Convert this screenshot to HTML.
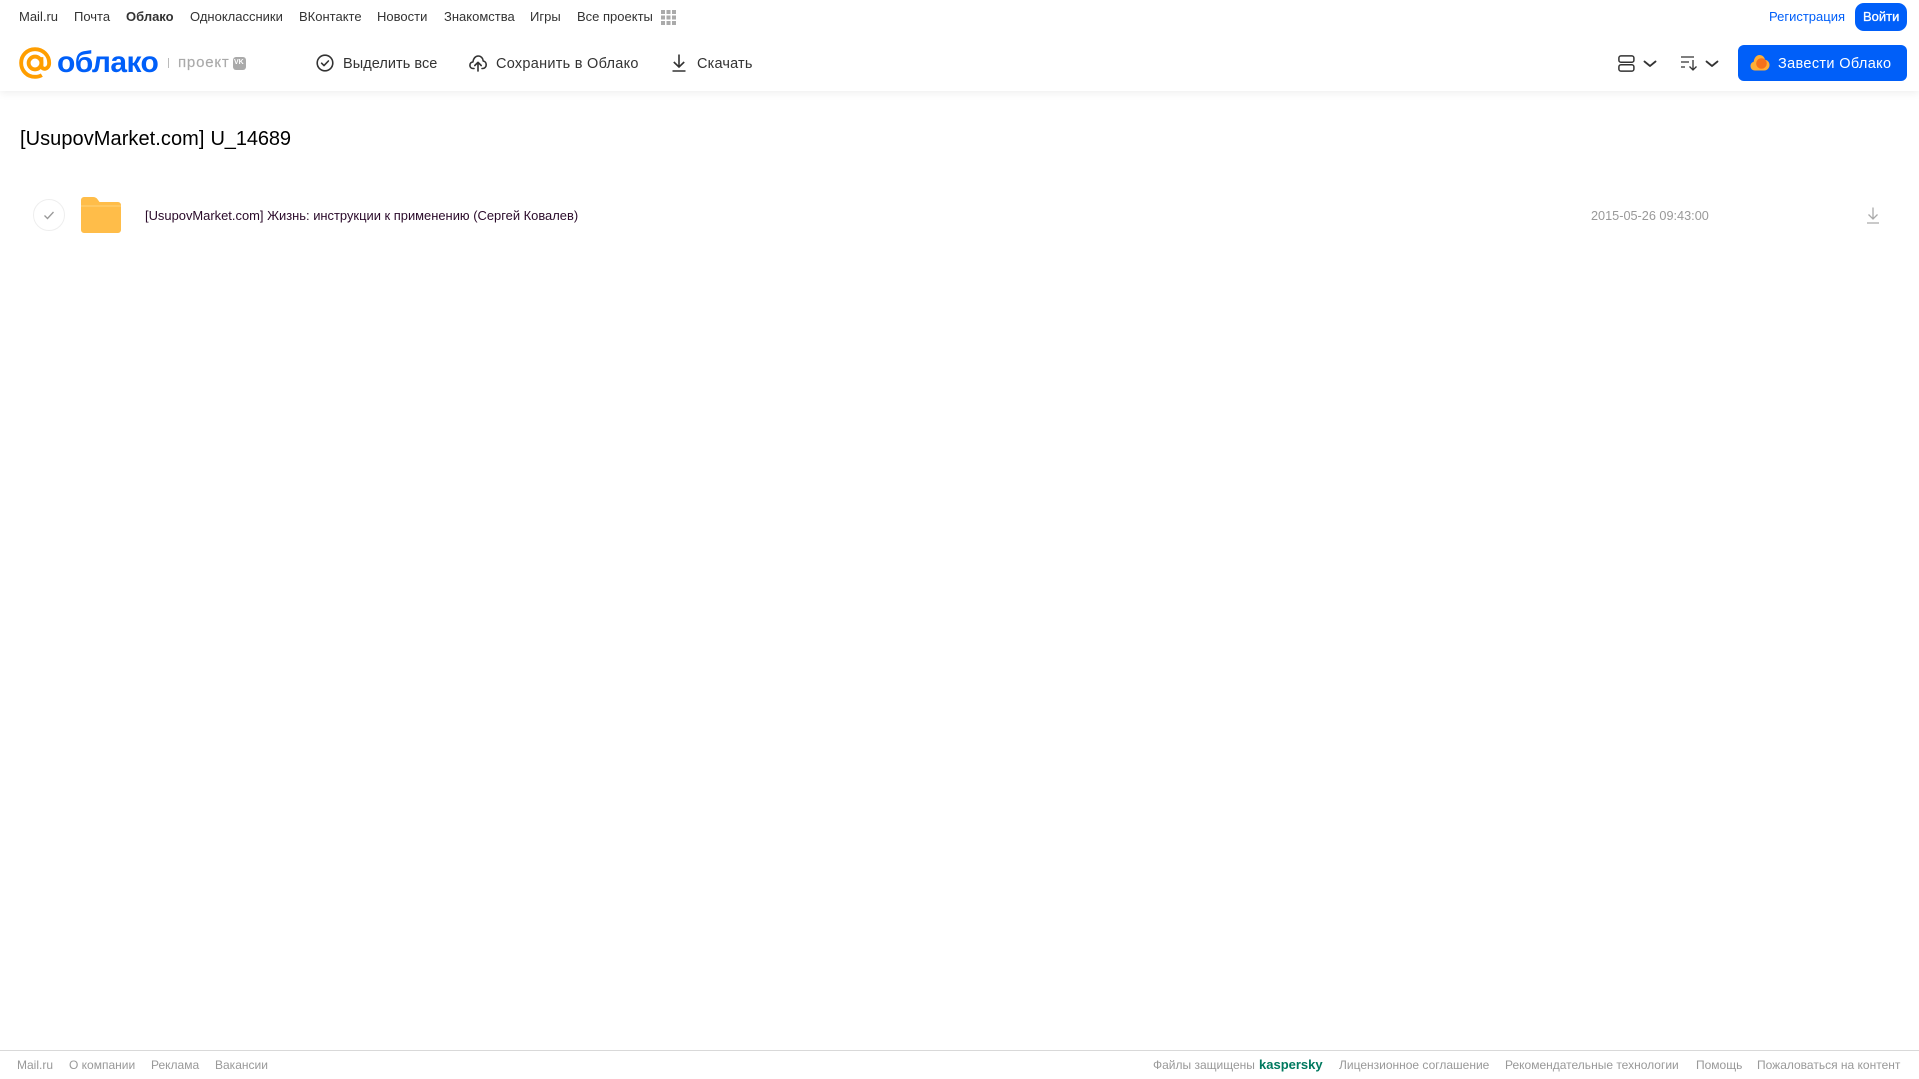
<!DOCTYPE html>
<html lang="ru"><head><meta charset="utf-8"><title>Облако</title>
<style>
html,body{margin:0;padding:0;background:#fff;width:1919px;height:1079px;overflow:hidden;font-family:"Liberation Sans",sans-serif}
.t{position:absolute;white-space:nowrap;line-height:20px}
.n{font-size:13px;color:#333;top:7px}
.a{font-size:14.5px;color:#333;top:54px}
.f{font-size:12px;color:#999;top:1055px}
svg{position:absolute;overflow:visible}
#hd{position:absolute;left:0;top:0;width:1919px;height:91px;background:#fff;box-shadow:0 2px 8px rgba(0,0,0,.07)}
</style></head><body>
<div id="hd"></div>
<span class="t n" style="left:19px">Mail.ru</span>
<span class="t n" style="left:74px">Почта</span>
<span class="t n" style="left:126px;font-weight:bold">Облако</span>
<span class="t n" style="left:190px">Одноклассники</span>
<span class="t n" style="left:299px">ВКонтакте</span>
<span class="t n" style="left:377px">Новости</span>
<span class="t n" style="left:444px">Знакомства</span>
<span class="t n" style="left:530px">Игры</span>
<span class="t n" style="left:577px">Все проекты</span>
<svg style="left:661px;top:10px" width="15" height="15" fill="#aaa"><rect x="0" y="0" width="4" height="4"/><rect x="5.5" y="0" width="4" height="4"/><rect x="11" y="0" width="4" height="4"/><rect x="0" y="5.5" width="4" height="4"/><rect x="5.5" y="5.5" width="4" height="4"/><rect x="11" y="5.5" width="4" height="4"/><rect x="0" y="11" width="4" height="4"/><rect x="5.5" y="11" width="4" height="4"/><rect x="11" y="11" width="4" height="4"/></svg>
<span class="t n" style="left:1769px;color:#005ff9">Регистрация</span>
<div style="position:absolute;left:1855px;top:3px;width:52px;height:28px;border-radius:9px;background:#005ff9"></div>
<span class="t n" style="left:1863px;color:#fff;-webkit-text-stroke:.3px #fff">Войти</span>

<svg style="left:19px;top:47px" width="33" height="32" viewBox="0 0 34 33" fill="none" stroke="#ff9e00" stroke-width="4"><circle cx="16.5" cy="16.5" r="6.6"/><path d="M23.1 10.5v8.5c0 5.2 8 4.6 8-2.500C31.100 8.500 24.600 2.200 16.500 2.200S2.200 8.500 2.200 16.500 8.500 30.800 16.500 30.800c2.800 0 5-.6 7-1.800"/></svg>
<span class="t" style="left:57px;top:45px;font-size:30px;line-height:36px;font-weight:bold;color:#005ff9;letter-spacing:-.6px">облако</span>
<div style="position:absolute;left:168px;top:58px;width:1px;height:10px;background:#bbb"></div>
<span class="t" style="left:178px;top:53px;font-size:15px;color:#aaa;letter-spacing:.8px;-webkit-text-stroke:.15px #aaa">проект</span>
<div style="position:absolute;left:233px;top:57px;width:13px;height:13px;border-radius:3px;background:#aaa"></div>
<span class="t" style="left:234px;top:53px;font-size:7px;font-weight:bold;color:#fff;line-height:20px">VK</span>

<svg style="left:316px;top:54px" width="18" height="18" fill="none" stroke="#333" stroke-width="1.600"><circle cx="9" cy="9" r="7.800"/><path d="M5.600 9.200l2.400 2.400 4.400-4.600" stroke-linecap="round" stroke-linejoin="round"/></svg>
<span class="t a" style="left:343px;letter-spacing:.05px">Выделить все</span>
<svg style="left:469px;top:54px" width="18" height="18" fill="none" stroke="#333" stroke-width="1.600" stroke-linecap="round" stroke-linejoin="round"><path d="M5 14.500H4.200C2.200 14.500 .9 13 .9 11.200c0-1.800 1.300-3.100 3-3.300C4.300 4.600 6.400 2 9.200 2c2.800 0 4.800 2.200 5 5 1.800.3 3 1.800 3 3.700 0 2-1.400 3.800-3.500 3.800H13"/><path d="M9 17V8.500M5.800 11.500L9 8.300l3.200 3.200"/></svg>
<span class="t a" style="left:496px;letter-spacing:.27px">Сохранить в Облако</span>
<svg style="left:671px;top:54px" width="16" height="18" fill="none" stroke="#333" stroke-width="1.600"><path d="M8 .5V13M2.800 8L8 13l5.200-5M1.500 17h13"/></svg>
<span class="t a" style="left:697px;letter-spacing:.17px">Скачать</span>

<svg style="left:1618px;top:55px" width="17" height="17" fill="none" stroke="#333" stroke-width="1.500"><rect x=".9" y=".9" width="15" height="6.300" rx="2"/><rect x=".9" y="9.800" width="15" height="6.300" rx="2"/></svg>
<svg style="left:1643px;top:60px" width="14" height="8" fill="none" stroke="#333" stroke-width="1.800" stroke-linecap="round" stroke-linejoin="round"><path d="M1.500 1.500L7 6l5.500-4.500"/></svg>
<svg style="left:1681px;top:56px" width="17" height="15" fill="none" stroke="#333" stroke-width="1.300"><path d="M0 1h13M0 6h8M0 11h4M12 4v10M8.500 10.500L12 14l3.500-3.500"/></svg>
<svg style="left:1705px;top:60px" width="14" height="8" fill="none" stroke="#333" stroke-width="1.800" stroke-linecap="round" stroke-linejoin="round"><path d="M1.500 1.500L7 6l5.500-4.500"/></svg>
<div style="position:absolute;left:1738px;top:45px;width:169px;height:36px;border-radius:6px;background:#005ff9"></div>
<svg style="left:1750px;top:54px" width="20" height="17"><path d="M5 16.500C2.200 16.500.5 14.500.5 12c0-2.200 1.300-3.800 3.200-4.300C4.200 3.800 6.500 1 9.500 1c2.800 0 5 2 5.500 4.800 2.600.4 4.500 2.500 4.500 5.200 0 3-2.300 5.500-5.300 5.500z" fill="#ffae35"/><circle cx="11.500" cy="9.500" r="5.300" fill="#f4711c"/></svg>
<span class="t a" style="left:1778px;color:#fff;letter-spacing:.35px">Завести Облако</span>

<span class="t" style="left:20px;top:127px;font-size:20px;line-height:24px;color:#000"><span style="letter-spacing:.06px">[UsupovMarket.com]</span><span style="letter-spacing:-.1px;margin-left:6px">U_14689</span></span>

<svg style="left:33px;top:199px" width="32" height="32" fill="none"><circle cx="16" cy="16" r="15.500" stroke="#eee"/><path d="M11.500 16.500l3 3 6-6.500" stroke="#999" stroke-width="1.300"/></svg>
<svg style="left:81px;top:197px" width="40" height="36"><path d="M0 3a3 3 0 013-3h9c2 0 3.500.8 4.500 2.200L18.500 5H37a3 3 0 013 3v25a3 3 0 01-3 3H3a3 3 0 01-3-3z" fill="#ffbd49"/><rect x="0" y="8" width="40" height="2" fill="#ffcf73" opacity=".6"/></svg>
<span class="t" style="left:145px;top:206px;font-size:12.93px;color:#2a0a2a">[UsupovMarket.com] Жизнь: инструкции к применению (Сергей Ковалев)</span>
<span class="t" style="left:1591px;top:206px;font-size:12.7px;color:#999">2015-05-26 09:43:00</span>
<svg style="left:1866px;top:207px" width="14" height="17" fill="none" stroke="#aaa" stroke-width="1.300"><path d="M7 .5V12M2.500 7.500L7 12l4.500-4.500M1 16h12"/></svg>

<div style="position:absolute;left:0;top:1050px;width:1919px;height:1px;background:#d9d9d9"></div>
<span class="t f" style="left:17px">Mail.ru</span>
<span class="t f" style="left:69px">О компании</span>
<span class="t f" style="left:151px">Реклама</span>
<span class="t f" style="left:215px">Вакансии</span>
<span class="t f" style="left:1153px">Файлы защищены</span>
<span class="t" style="left:1259px;top:1055px;font-size:13px;font-weight:bold;color:#00795f">kaspersky</span>
<span class="t f" style="left:1339px">Лицензионное соглашение</span>
<span class="t f" style="left:1505px">Рекомендательные технологии</span>
<span class="t f" style="left:1696px">Помощь</span>
<span class="t f" style="left:1757px">Пожаловаться на контент</span>
</body></html>
